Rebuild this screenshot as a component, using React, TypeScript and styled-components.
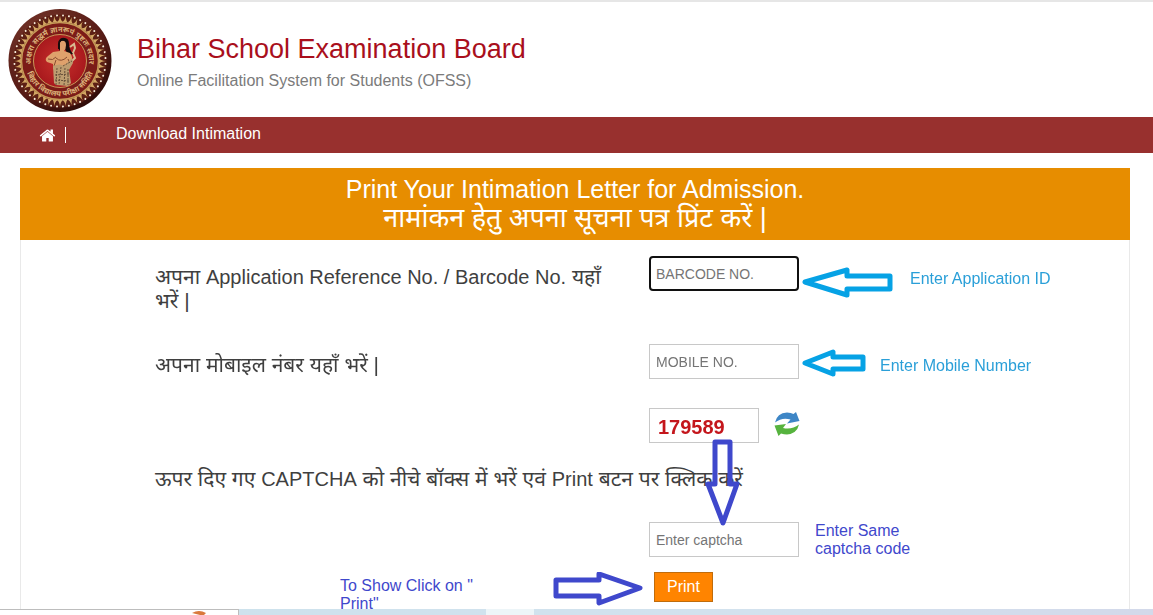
import React from "react";
import styled, { createGlobalStyle } from "styled-components";

const GlobalStyle = createGlobalStyle`
  *, *::before, *::after { box-sizing: border-box; }
  body {
    margin: 0;
    background: #fff;
    color: #3f3f3f;
    font-family: "Liberation Sans", "Noto Sans Devanagari", "Noto Sans", sans-serif;
    font-size: 16px;
  }
`;

const Page = styled.div`
  display: flex;
  flex-direction: column;
  min-height: 100vh;
  border-top: 2px solid #e6e6e6;
`;

const Header = styled.header`
  display: flex;
  align-items: flex-start;
  gap: 25px;
  height: 115px;
  padding: 7px 8px 0;
`;

const Titles = styled.div`
  padding-top: 23px;
`;

const Title = styled.h1`
  margin: 0;
  font-size: 27px;
  font-weight: 400;
  line-height: 34px;
  color: #a90f1c;
`;

const Subtitle = styled.p`
  margin: 0;
  line-height: 30px;
  color: #7b7b7b;
`;

const Nav = styled.nav`
  display: flex;
  align-items: center;
  height: 36px;
  padding-left: 39px;
  background: #98302e;
`;

const NavLink = styled.a`
  display: flex;
  align-items: center;
  line-height: 18px;
  padding-bottom: 2px;
  color: #fff;
  text-decoration: none;
`;

const HomeLink = styled(NavLink)`
  width: 27px;
  padding-bottom: 0;
  border-right: 1px solid #fff;
  height: 16px;
  margin-right: 50px;
`;

const Panel = styled.main`
  display: flex;
  flex: 1;
  flex-direction: column;
  margin: 15px 23px 0 20px;
`;

const Banner = styled.h2`
  height: 72px;
  margin: 0;
  padding-top: 7px;
  background: #e78d00;
  color: #fff;
  font-size: 25px;
  font-weight: 400;
  line-height: 29px;
  text-align: center;
`;

const BannerHindi = styled.span`
  display: block;
  font-size: 27px;
`;

const Form = styled.form`
  flex: 1;
  padding: 16px 20px 0 134px;
  border: solid #e9e9e9;
  border-width: 0 1px;
`;

const Row = styled.div<{ $height: number }>`
  display: flex;
  align-items: flex-start;
  height: ${(p) => p.$height}px;
`;

const LabelCell = styled.div`
  flex: 0 0 494px;
  padding: 9px 40px 0 0;
`;

const Label = styled.label`
  display: block;
  font-size: 21px;
  line-height: 24px;
`;

const Latin = styled.span`
  font-size: 20px;
`;

const Field = styled.input`
  flex: none;
  width: 150px;
  height: 35px;
  padding: 0 6px;
  border: 1px solid #c8c8c8;
  background: #fff;
  font: 14px "Liberation Sans", sans-serif;
  color: #333;
  outline: 0;
  &::placeholder { color: #757575; opacity: 1; }
`;

const ActiveField = styled(Field)`
  padding: 0 5px;
  border: 2px solid #101010;
  border-radius: 4px;
`;

const Hint = styled.p<{ $tone: string; $left: number; $top: number; $width?: number }>`
  margin: 0;
  padding-top: ${(p) => p.$top}px;
  margin-left: ${(p) => p.$left}px;
  width: ${(p) => (p.$width ? `${p.$width}px` : "auto")};
  line-height: 18px;
  color: ${(p) => p.$tone};
`;

const Arrow = styled.svg`
  flex: none;
  display: block;
  fill: none;
  stroke-width: 5;
  stroke-linejoin: round;
`;

const SideArrow = styled(Arrow)`
  margin: 4px 0 0 3px;
  stroke: #06a2e5;
`;

const PrintArrow = styled(Arrow)`
  margin-left: auto;
  stroke: #3f48cc;
`;

const CaptchaBox = styled.div`
  position: relative;
  width: 110px;
  height: 35px;
  margin-left: 494px;
  padding-left: 8px;
  border: 1px solid #c8c8c8;
  color: #c4161c;
  font-size: 20px;
  font-weight: 700;
  line-height: 36px;
`;

const DownArrow = styled(Arrow)`
  position: absolute;
  left: 55px;
  top: 29px;
  z-index: 1;
  stroke: #3f48cc;
`;

const RefreshButton = styled.button`
  width: 28px;
  height: 28px;
  margin: 2px 0 0 14px;
  padding: 0;
  border: 0;
  background: none;
`;

const PrintGuide = styled.div`
  display: flex;
  flex: 0 0 494px;
`;

const PrintButton = styled.button`
  width: 59px;
  height: 30px;
  margin-left: 5px;
  padding: 0;
  border: 1px solid #c06c0c;
  background: #ff8400;
  color: #fff;
  font: 16px "Liberation Sans", sans-serif;
`;

const Taskbar = styled.footer`
  position: fixed;
  inset: auto 0 0 0;
  z-index: 2;
  display: flex;
  height: 6px;
  background: linear-gradient(90deg, #cbe2ec, #d3e2ee 65%, #d3d9ea);
`;

const SearchStrip = styled.div`
  display: flex;
  align-items: flex-end;
  width: 239px;
  padding-left: 192px;
  border: solid #bdbdbd;
  border-width: 1px 1px 0 0;
  background: #fff;
`;

const ActiveTask = styled.div`
  width: 48px;
  margin-left: 247px;
  background: #edf5f8;
`;

const beads = Array.from({ length: 48 }, (_, i) => i * 7.5);

const Emblem = () => (
  <svg width="104" height="104" viewBox="0 0 104 104" role="img" aria-label="Bihar School Examination Board emblem">
    <defs>
      <radialGradient id="rim" cx="35%" cy="30%" r="75%">
        <stop offset="0" stopColor="#7a3a2e" />
        <stop offset=".75" stopColor="#571b15" />
        <stop offset="1" stopColor="#2e0b08" />
      </radialGradient>
      <radialGradient id="field">
        <stop offset="0" stopColor="#c8302c" />
        <stop offset="1" stopColor="#a8191d" />
      </radialGradient>
      <path id="upperArc" d="M25 62.500 A29 29 0 1 1 79 62.500" />
      <path id="lowerArc" d="M17.500 58 A35 35 0 0 0 86.500 58" />
    </defs>
    <circle cx="52" cy="51.500" r="51.5" fill="url(#rim)" />
    <circle cx="52" cy="52" r="46.500" fill="#5d2015" />
    {beads.map((a) => (
      <g key={a} transform={`rotate(${a} 52 52)`}>
        <path d="M49 13 Q51.500 11.500 52 6.500 Q52.500 11.500 55 13Z" fill="#d3a764" />
        <circle cx="55" cy="6.500" r="1" fill="#f7eddc" />
      </g>
    ))}
    <circle cx="52" cy="52" r="38.500" fill="#7b1c18" stroke="#c79b59" strokeWidth="1.5" />
    <circle cx="52" cy="52" r="26.500" fill="url(#field)" stroke="#c89859" strokeWidth="1" />
    <g fill="#dcb27a" fontSize="7.500" fontWeight="700">
      <text><textPath href="#upperArc" startOffset="50%" textAnchor="middle">अक्षरा सद्धर्म ज्ञानरूपं पुष्टतः सदार</textPath></text>
      <text><textPath href="#lowerArc" startOffset="50%" textAnchor="middle">बिहार विद्यालय परीक्षा समिति</textPath></text>
    </g>
    <path d="M62 38 l4 -3 1 4 -2 5 2 5 -4 4" fill="none" stroke="#d8bb91" strokeWidth="2" />
    <path d="M50 40 Q49 29 55 29 Q61 28 61 35 Q61 40 65 45 L60 46 L57 40Z" fill="#160d0c" />
    <path d="M53 32 Q58 31 58 36 Q58 40 56 42 L62 44 Q65 48 64 53 L59 58 L60 62 Q52 65 45 60 L45 55 L39 53 Q36 50 40 47 L45 43 L52 42 Q50 36 53 32Z" fill="#dfa16c" />
    <path d="M52 33 Q56 29 60 34 Q58 28 54 29 Q50 30 50 39 L52 42Z" fill="#160d0c" />
    <path d="M40 50 Q45 52 48 48 M48 49 Q53 54 59 48 M48 51 L46 57 M60 50 L62 55" fill="none" stroke="#884c31" strokeWidth="1" />
    <path d="M45 57 Q52 54 56 57 L64 49 L65 54 L61 61 L63 74 L60 77 L48 76 L46 74Z" fill="#bd9d70" />
    <path d="M49 59 L48 76 M53 58 L51 76 M57 59 L56 77 M60 60 L60 76 M47 66 L62 65 M47 71 L62 72 M55 57 L64 52" stroke="#66503a" strokeWidth="1" strokeDasharray="2 1" />
  </svg>
);

const HomeIcon = () => (
  <svg width="17" height="17" viewBox="0 0 1792 1792" fill="#fff" aria-hidden="true">
    <path d="M1472 992v480q0 26-19 45t-45 19h-384v-384h-256v384h-384q-26 0-45-19t-19-45v-480q0-1 .5-3t.5-3l575-474 575 474q1 2 1 6zm223-69l-62 74q-8 9-21 11h-3q-13 0-21-7l-692-577-692 577q-12 8-24 7-13-2-21-11l-62-74q-8-10-7-23.500t11-21.500l719-599q32-26 76-26t76 26l244 204v-195q0-14 9-23t23-9h192q14 0 23 9t9 23v408l219 182q10 8 11 21.500t-7 23.500z" />
  </svg>
);

const RefreshIcon = () => (
  <svg width="28" height="28" viewBox="0 0 28 28" aria-hidden="true">
    <path d="M2 12.500 Q4 3 14 2.500 Q18 2.500 20.500 4 L23 2 L26.500 11 L14 13.500 L17.500 9.500 Q9 7 2 12.500Z" fill="#3e86c6" />
    <path d="M26 14.500 Q24 23.500 14 24.500 Q11 24.500 8 23.500 L5.500 26 L1.500 15.500 L13 14 L10 18 Q19 20 26 14.500Z" fill="#56b33e" />
  </svg>
);

export default function App() {
  return (
    <>
      <GlobalStyle />
      <Page>
        <Header>
          <Emblem />
          <Titles>
            <Title>Bihar School Examination Board</Title>
            <Subtitle>Online Facilitation System for Students (OFSS)</Subtitle>
          </Titles>
        </Header>
        <Nav>
          <HomeLink href="#" aria-label="Home"><HomeIcon /></HomeLink>
          <NavLink href="#download">Download Intimation</NavLink>
        </Nav>
        <Panel>
          <Banner>
            Print Your Intimation Letter for Admission.
            <BannerHindi>नामांकन हेतु अपना सूचना पत्र प्रिंट करें |</BannerHindi>
          </Banner>
          <Form onSubmit={(e) => e.preventDefault()}>
            <Row $height={88}>
              <LabelCell>
                <Label htmlFor="barcode">
                  अपना <Latin>Application Reference No. / Barcode No.</Latin> यहाँ
                  <br />
                  भरें |
                </Label>
              </LabelCell>
              <ActiveField id="barcode" placeholder="BARCODE NO." autoFocus />
              <SideArrow width="92" height="44" viewBox="0 0 92 44" aria-hidden="true">
                <path d="M3 22 L45 10 V16 H88 V29 H45 V35Z" />
              </SideArrow>
              <Hint $tone="#2a9fd8" $left={16} $top={14}>Enter Application ID</Hint>
            </Row>
            <Row $height={64}>
              <LabelCell>
                <Label htmlFor="mobile">अपना मोबाइल नंबर यहाँ भरें |</Label>
              </LabelCell>
              <Field id="mobile" placeholder="MOBILE NO." />
              <SideArrow width="66" height="30" viewBox="0 0 66 30" aria-hidden="true">
                <path d="M3 15 L31 4 V9 H61 V21 H31 V26Z" />
              </SideArrow>
              <Hint $tone="#2a9fd8" $left={12} $top={13}>Enter Mobile Number</Hint>
            </Row>
            <Row $height={59}>
              <CaptchaBox>
                179589
                <DownArrow width="40" height="92" viewBox="0 0 40 92" aria-hidden="true">
                  <path d="M10 4 H25 V46 H32 L18 85 L3 46 H10Z" />
                </DownArrow>
              </CaptchaBox>
              <RefreshButton type="button" aria-label="Refresh captcha"><RefreshIcon /></RefreshButton>
            </Row>
            <Row $height={55}>
              <Label htmlFor="captcha">
                ऊपर दिए गए <Latin>CAPTCHA</Latin> को नीचे बॉक्स में भरें एवं <Latin>Print</Latin> बटन पर क्लिक करें
              </Label>
            </Row>
            <Row $height={50}>
              <LabelCell />
              <Field id="captcha" placeholder="Enter captcha" />
              <Hint $tone="#3f48cc" $left={16} $top={0} $width={110}>Enter Same captcha code</Hint>
            </Row>
            <Row $height={34}>
              <PrintGuide>
                <Hint $tone="#3f48cc" $left={185} $top={5} $width={150}>To Show Click on " Print"</Hint>
                <PrintArrow width="96" height="36" viewBox="0 0 96 36" aria-hidden="true">
                  <path d="M3 8 H46 V2 L87 16 L46 31 V24 H3Z" />
                </PrintArrow>
              </PrintGuide>
              <PrintButton type="submit">Print</PrintButton>
            </Row>
          </Form>
        </Panel>
        <Taskbar>
          <SearchStrip>
            <svg width="14" height="4" viewBox="0 0 14 4" aria-hidden="true">
              <path d="M0 2 Q7 -2 14 2 L12 4 H8Z" fill="#d9793c" />
            </svg>
          </SearchStrip>
          <ActiveTask />
        </Taskbar>
      </Page>
    </>
  );
}
